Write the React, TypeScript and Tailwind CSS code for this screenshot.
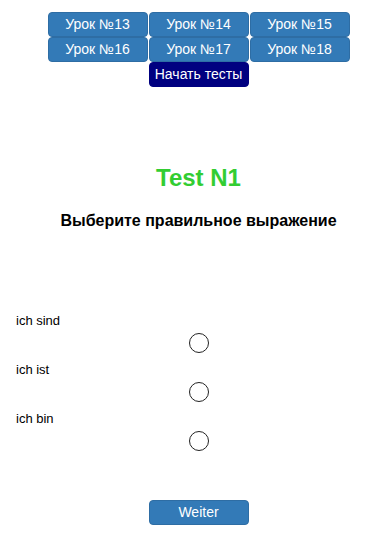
import React from "react";

const lessons = ["Урок №13", "Урок №14", "Урок №15", "Урок №16", "Урок №17", "Урок №18"];
const options = ["ich sind", "ich ist", "ich bin"];

export default function App() {
  return (
    <div className="w-[385px] h-[545px] bg-white pl-[12px] font-['Liberation_Sans',Arial,sans-serif] text-black">
      <div className="pt-[12px] flex flex-col items-center">
        <div className="grid grid-cols-[100px_100px_100px] gap-x-[1px]">
          {lessons.map((l) => (
            <button
              key={l}
              className="h-[25px] bg-[#337ab7] border border-[#2e6da4] rounded-[4px] text-white text-[14px] leading-[23px] text-center"
            >
              {l}
            </button>
          ))}
        </div>
        <button className="w-[100px] h-[25px] bg-[#000080] border border-[#000080] rounded-[4px] text-white text-[14px] leading-[23px] text-center">
          Начать тесты
        </button>
      </div>
      <h1 className="mt-[77px] text-center text-[24px] font-bold text-[#32cd32] leading-[28px]">Test N1</h1>
      <h2 className="mt-[19px] text-center text-[16px] font-bold leading-[20px]">Выберите правильное выражение</h2>
      <div className="mt-[82px] flex flex-col">
        {options.map((o) => (
          <div key={o} className="h-[49px] flex flex-col">
            <div className="pl-[4px] text-[13px] leading-[16px]">{o}</div>
            <div className="flex justify-center mt-[4px]">
              <span className="w-[20px] h-[20px] rounded-full border-[1.5px] border-[#222]" />
            </div>
          </div>
        ))}
      </div>
      <div className="mt-[40px] flex justify-center">
        <button className="w-[100px] h-[25px] bg-[#337ab7] border border-[#2e6da4] rounded-[4px] text-white text-[14px] leading-[23px] text-center">
          Weiter
        </button>
      </div>
    </div>
  );
}
